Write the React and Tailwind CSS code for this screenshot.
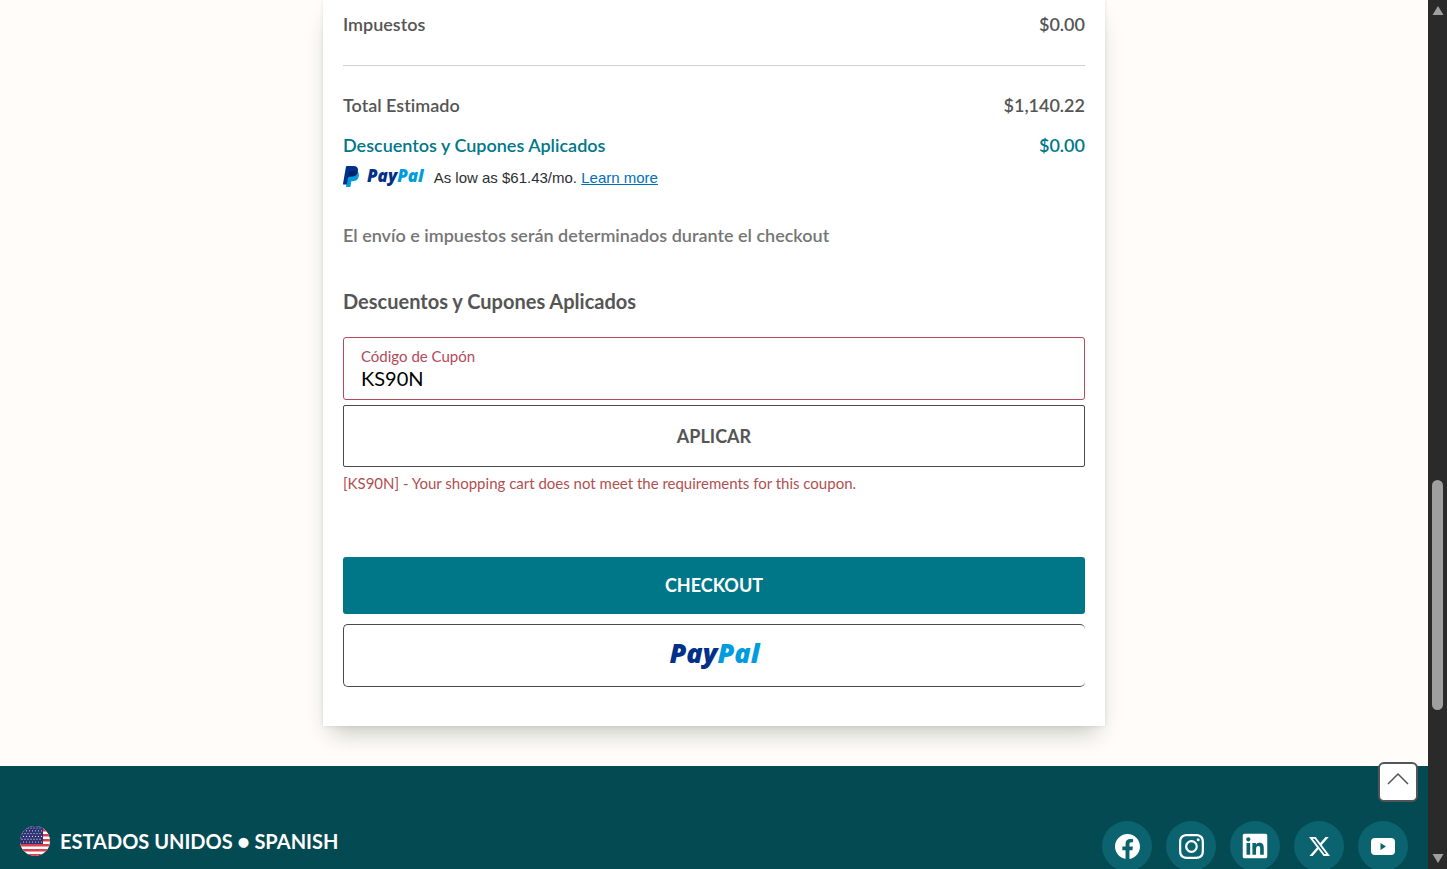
import React from 'react'
import { BsFacebook, BsInstagram, BsTwitterX } from 'react-icons/bs'
import { FaLinkedin } from 'react-icons/fa'

const SOCIALS = [
  { name: 'Facebook', icon: <BsFacebook className="size-[25px]" /> },
  { name: 'Instagram', icon: <BsInstagram className="size-[25px]" /> },
  { name: 'LinkedIn', icon: <FaLinkedin className="size-7" /> },
  { name: 'X', icon: <BsTwitterX className="size-[21px]" /> },
  { name: 'YouTube', icon: <YouTubeIcon /> },
]

function YouTubeIcon() {
  return (
    <svg viewBox="0 0 24 17" className="w-6 h-[17px]" fill="currentColor" aria-hidden="true">
      <path
        fillRule="evenodd"
        d="M4 0h16a4 4 0 0 1 4 4v9a4 4 0 0 1-4 4H4a4 4 0 0 1-4-4V4a4 4 0 0 1 4-4ZM9.500 5v7l5.500-3.500L9.500 5Z"
      />
    </svg>
  )
}

function PayPalMark() {
  return (
    <svg viewBox="0 0 16 21" className="w-4 h-[21px] self-start" aria-hidden="true">
      <path fill="#009cde" d="M5 6h9.800c1.500 1.400 1.300 4 .4 6-1 2.200-3 3.200-5.800 3.200H8.300L7.400 21H3l2-15Z" />
      <path fill="#003087" d="M2.900.9C3 .4 3.400 0 3.900 0h6.500c3.500 0 5 1.900 4.500 5-.6 3.900-3 5.600-6.800 5.600H6.200c-.6 0-1 .4-1.100 1L3.900 18.500H.5c-.4 0-.6-.3-.5-.7L2.900.9Z" />
      <path fill="#012169" d="M5.900 6c.1-.5.500-.8 1-.8h4.300c1.300 0 2.500.1 3.600.6-.7 3.500-3.100 4.800-6.700 4.800H6.200c-.6 0-1 .4-1.100 1L5.900 6Z" />
    </svg>
  )
}

function PayPalWord({ className }) {
  return (
    <span className={`font-['Open_Sans',sans-serif] font-extrabold italic text-[#003087] ${className}`}>
      Pay<span className="text-[#009cde]">Pal</span>
    </span>
  )
}

function FlagUS() {
  return (
    <svg viewBox="0 0 30 30" className="size-[30px] rounded-full" aria-hidden="true">
      <rect width="30" height="30" fill="#fff" />
      {[...Array(6)].map((_, i) => (
        <rect key={i} y={3 + i * 5} width="30" height="2.5" fill="#d8404f" />
      ))}
      <rect width="23" height="18" fill="#2e3272" />
      {[...Array(6)].map((_, row) =>
        [...Array(7)].map((_, col) => (
          <circle key={`${row}-${col}`} cx={2 + col * 3 + (row % 2) * 1.5} cy={2 + row * 2.8} r="0.6" fill="#dfe2f5" />
        ))
      )}
    </svg>
  )
}

function SummaryRow({ label, value, className = '' }) {
  return (
    <div className={`flex justify-between font-semibold text-[18px] leading-6 ${className}`}>
      <span>{label}</span>
      <span>{value}</span>
    </div>
  )
}

function Scrollbar() {
  return (
    <div className="w-[19px] shrink-0 bg-[#2b2a2b] flex flex-col items-center py-1" aria-hidden="true">
      <svg viewBox="0 0 12 12" className="size-3 shrink-0" fill="#a0a0a0"><path d="M6 2l5.500 9H.5z" /></svg>
      <div className="grow-[464]" />
      <div className="grow-[230] w-[11px] rounded-full bg-[#9f9f9f]" />
      <div className="grow-[143]" />
      <svg viewBox="0 0 12 12" className="size-3 shrink-0" fill="#a0a0a0"><path d="M.5 1h11L6 10z" /></svg>
    </div>
  )
}

export default function App() {
  return (
    <div className="flex h-screen overflow-hidden font-['Lato',sans-serif] text-[#555] [font-variant-ligatures:none]">
      <div className="flex-1 min-w-0 flex flex-col bg-[#fffcf9]">
        <main className="shrink-0 pb-10">
          {/* Order summary */}
          <section className="mx-auto w-full max-w-[782px] bg-white px-5 pt-3 pb-[39px] shadow-[0_14px_22px_-8px_rgba(40,60,40,0.28),0_0_4px_rgba(40,60,40,0.12)]">
            <SummaryRow label="Impuestos" value="$0.00" />
            <hr className="mt-[29px] border-[#d0d0d0]" />
            <SummaryRow label="Total Estimado" value="$1,140.22" className="mt-[27px]" />
            <SummaryRow label="Descuentos y Cupones Aplicados" value="$0.00" className="mt-4 text-[#007788]" />

            <div className="mt-[9px] flex items-center h-6 font-['Liberation_Sans',sans-serif] text-[15px] text-[#2c2e2f]">
              <PayPalMark />
              <PayPalWord className="ml-2 pb-1 text-[17px]" />
              <span className="ml-[10px]">
                As low as $61.43/mo. <a href="#" className="text-[#0070ba] underline">Learn more</a>
              </span>
            </div>

            <p className="mt-[33px] text-[18px] leading-6 font-semibold text-[#757575]">
              El envío e impuestos serán determinados durante el checkout
            </p>

            {/* Coupon */}
            <form onSubmit={(e) => e.preventDefault()}>
              <h2 className="mt-[42px] text-[20px] leading-6 font-bold">Descuentos y Cupones Aplicados</h2>
              <div className="mt-6 flex flex-col h-[63px] rounded-[3px] border border-[#b5495b] px-[17px] pt-2">
                <label htmlFor="coupon" className="text-[15px] leading-5 text-[#b5495b]">Código de Cupón</label>
                <input id="coupon" type="text" defaultValue="KS90N" className="w-full text-[20px] leading-6 text-black outline-none" />
              </div>
              <button type="submit" className="mt-[5px] w-full h-[62px] rounded-[2px] border border-[#4a4a4a] text-[18px] font-bold cursor-pointer">
                APLICAR
              </button>
              <p className="mt-1 text-[15px] leading-6 text-[#b0504f]">
                [KS90N] - Your shopping cart does not meet the requirements for this coupon.
              </p>
            </form>

            <button className="mt-[62px] block w-full h-[57px] rounded-[3px] bg-[#007788] text-white text-[18px] font-bold cursor-pointer">
              CHECKOUT
            </button>
            <button className="mt-[10px] block w-full h-[63px] pb-1 rounded-[5px] border border-r-0 border-[#4a4a4a] cursor-pointer">
              <PayPalWord className="text-[27px]" />
            </button>
          </section>
        </main>

        <footer className="relative shrink-0 bg-[#044a53] px-5 pt-[55px] pb-10 flex items-start justify-between text-white">
          <button
            aria-label="Volver arriba"
            className="absolute -top-1 right-[10px] size-10 rounded-md border-2 border-[#4f5558] bg-white text-[#555] flex justify-center pt-2 cursor-pointer"
          >
            <svg viewBox="0 0 22 14" className="w-[22px] h-[14px]" fill="none" stroke="currentColor" strokeWidth="1.5" aria-hidden="true">
              <path d="M1 12 11 2l10 10" />
            </svg>
          </button>

          <a href="#" className="flex items-center gap-[10px] h-10 text-[20px] font-bold">
            <FlagUS />
            ESTADOS UNIDOS ● SPANISH
          </a>

          <nav className="flex gap-[14px]">
            {SOCIALS.map((s) => (
              <a key={s.name} href="#" aria-label={s.name} className="size-[50px] rounded-full bg-[#0b636f] flex items-center justify-center">
                {s.icon}
              </a>
            ))}
          </nav>
        </footer>
      </div>
      <Scrollbar />
    </div>
  )
}
